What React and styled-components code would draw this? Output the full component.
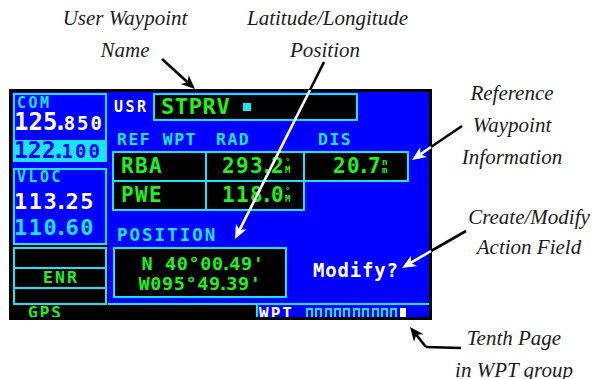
import React from "react";
import styled, { createGlobalStyle } from "styled-components";

const BLUE = "#0000ff";
const CYAN = "#1ce4f8";
const GREEN = "#22f01c";
const MONO = `"DejaVu Sans Mono", "Liberation Mono", monospace`;

const Global = createGlobalStyle`
  html, body { margin: 0; padding: 0; background: #fff; }
  body { width: 592px; height: 379px; overflow: hidden; }
`;

const Page = styled.div`
  position: relative;
  width: 592px;
  height: 379px;
  display: grid;
  grid-template-columns: 432px 160px;
  background: #fff;
`;

const LeftPart = styled.div`
  display: flex;
  flex-direction: column;
`;

const TopCaptions = styled.div`
  height: 89px;
  display: grid;
  grid-template-columns: 50px 150px 47px 156px;
`;

const Caption = styled.div`
  grid-column: ${(p) => p.$col || "auto"};
  font-family: "Liberation Serif", "DejaVu Serif", serif;
  font-style: italic;
  font-size: 21px;
  line-height: ${(p) => p.$lh || 32}px;
  color: #1c1c1c;
  text-align: center;
  padding-top: ${(p) => p.$pt || 0}px;
  padding-left: ${(p) => p.$pl || 0}px;
  margin-top: ${(p) => p.$mt || 0}px;
  white-space: nowrap;
`;

const RightCaptions = styled.div`
  display: flex;
  flex-direction: column;
  padding-top: 77px;
`;

/* ---------- the GPS screen ---------- */

const Screen = styled.div`
  margin-left: 9px;
  width: 423px;
  height: 231px;
  box-sizing: border-box;
  background: #000;
  padding: 3px;
  display: flex;
  flex-direction: column;
  font-family: ${MONO};
  font-weight: bold;
`;

const Main = styled.div`
  display: flex;
  height: 213px;
`;

const LeftCol = styled.div`
  width: 96px;
  display: flex;
  flex-direction: column;
`;

const UpperLeft = styled.div`
  background: ${BLUE};
  padding: 1px 1px 0;
  height: 153px;
  box-sizing: border-box;
  display: flex;
  flex-direction: column;
  gap: 6px;
`;

const RadioBox = styled.div`
  height: ${(p) => p.$h}px;
  box-sizing: border-box;
  border: 2px solid ${CYAN};
  border-bottom-width: ${(p) => (p.$open ? 0 : 2)}px;
  display: flex;
  flex-direction: column;
`;

const RadioLabel = styled.div`
  font-size: 15px;
  line-height: 15px;
  letter-spacing: 2.5px;
  color: ${CYAN};
  padding-left: 2px;
  margin-top: ${(p) => p.$mt || 0}px;
`;

const Freq = styled.div`
  font-size: ${(p) => p.$size}px;
  line-height: ${(p) => p.$size}px;
  letter-spacing: ${(p) => p.$ls || 0}px;
  color: ${(p) => p.$color};
  margin-top: ${(p) => p.$mt || 0}px;
  margin-left: -1px;
  white-space: nowrap;
`;

const Small = styled.span`
  font-size: ${(p) => p.$size}px;
  letter-spacing: ${(p) => p.$ls || 0}px;
`;

const Dot = styled.span`
  margin: 0 -0.17em;
`;

const ActiveBand = styled.div`
  margin: auto -2px 0;
  height: 22px;
  background: ${CYAN};
  padding-left: 2px;
  display: flex;
  align-items: center;
`;

const LowerLeft = styled.div`
  flex: 1;
  background: #000;
  padding: 2px 1px 0;
  display: flex;
  flex-direction: column;
`;

const SideCell = styled.div`
  height: ${(p) => p.$h}px;
  box-sizing: border-box;
  border: 2px solid ${CYAN};
  display: flex;
  align-items: center;
  justify-content: center;
  color: ${GREEN};
  font-size: 16.5px;
  line-height: 16px;
  letter-spacing: 2px;
  padding-left: 2px;
  & + & {
    margin-top: -2px;
  }
`;

const RightPanel = styled.div`
  flex: 1;
  background: ${BLUE};
  border-bottom: 2px solid ${CYAN};
  box-sizing: border-box;
  padding: 1px 0 0 4px;
  display: flex;
  flex-direction: column;
`;

const TopRow = styled.div`
  display: flex;
  align-items: center;
  height: 28px;
`;

const UsrLabel = styled.div`
  width: 41px;
  box-sizing: border-box;
  padding-left: 2px;
  color: #fff;
  font-size: 15px;
  line-height: 15px;
  letter-spacing: 2.5px;
`;

const NameBox = styled.div`
  width: 205px;
  height: 28px;
  box-sizing: border-box;
  border: 2px solid ${CYAN};
  background: #000;
  display: flex;
  align-items: center;
  padding-left: 6px;
`;

const NameText = styled.span`
  color: ${GREEN};
  font-size: 22px;
  line-height: 22px;
  letter-spacing: 0.6px;
`;

const Cursor = styled.span`
  width: 8px;
  height: 8px;
  background: ${CYAN};
  margin-left: 13px;
`;

const HeaderRow = styled.div`
  display: grid;
  grid-template-columns: 93px 98px 106px;
  margin-top: 11px;
  height: 16px;
`;

const HeaderText = styled.div`
  padding-left: ${(p) => p.$pl}px;
  color: ${CYAN};
  font-size: 16.5px;
  line-height: 16px;
  letter-spacing: 1.5px;
  white-space: nowrap;
`;

const Table = styled.div`
  margin-top: 3px;
  display: flex;
  flex-direction: column;
`;

const TRow = styled.div`
  display: flex;
  height: 31px;
  & + & {
    margin-top: -2px;
  }
`;

const TCell = styled.div`
  width: ${(p) => p.$w}px;
  box-sizing: border-box;
  border: 2px solid ${CYAN};
  background: #000;
  display: flex;
  align-items: center;
  padding-left: ${(p) => p.$pl}px;
  & + & {
    margin-left: -2px;
  }
`;

const CellText = styled.span`
  color: ${GREEN};
  font-size: 21px;
  line-height: 21px;
  letter-spacing: 1.4px;
  white-space: nowrap;
`;

const Units = styled.span`
  display: inline-flex;
  flex-direction: column;
  justify-content: space-between;
  height: 16px;
  margin-left: 0px;
  margin-top: -1px;
  color: ${GREEN};
  font-size: 9px;
  line-height: 8px;
  letter-spacing: 0;
`;

const SectionLabel = styled.div`
  margin-top: 16px;
  padding-left: 5px;
  color: ${CYAN};
  font-size: 17.5px;
  line-height: 17px;
  letter-spacing: 2px;
`;

const BottomRow = styled.div`
  display: flex;
  align-items: center;
  margin-top: 3px;
`;

const PosBox = styled.div`
  margin-left: 1px;
  width: 174px;
  height: 51px;
  box-sizing: border-box;
  border: 2px solid ${CYAN};
  background: #000;
  display: flex;
  flex-direction: column;
  align-items: center;
  justify-content: center;
  padding-top: 2px;
`;

const Coord = styled.div`
  color: ${GREEN};
  font-size: 18.5px;
  line-height: 20px;
  letter-spacing: 0.6px;
  white-space: nowrap;
  margin-left: ${(p) => p.$ml || 0}px;
`;

const Action = styled.div`
  margin-left: 26px;
  margin-top: -4px;
  color: #fff;
  font-size: 19px;
  line-height: 19px;
  letter-spacing: 0.8px;
`;

const Strip = styled.div`
  display: flex;
  height: 12px;
  overflow: hidden;
`;

const StripLeft = styled.div`
  width: 244px;
  box-sizing: border-box;
  background: #000;
  padding-left: 16px;
  color: ${GREEN};
  font-size: 16px;
  line-height: 16px;
  letter-spacing: 2px;
`;

const StripRight = styled.div`
  flex: 1;
  background: ${BLUE};
  border-left: 2px solid ${CYAN};
  display: flex;
  align-items: flex-start;
  padding-left: 1px;
`;

const StripWord = styled.span`
  color: #fff;
  font-size: 16px;
  line-height: 16px;
  letter-spacing: 2px;
  margin-top: 1px;
`;

const PageMarks = styled.div`
  display: flex;
  gap: 2.4px;
  margin-left: 12px;
  margin-top: 3px;
`;

const PageMark = styled.span`
  width: 7px;
  height: 12px;
  box-sizing: border-box;
  border: 2px solid ${CYAN};
  border-bottom: 0;
  background: ${(p) => (p.$current ? "#fff" : "transparent")};
  ${(p) => (p.$current ? "border-color: #fff; width: 6px;" : "")}
`;

const Overlay = styled.svg`
  position: absolute;
  left: 0;
  top: 0;
  pointer-events: none;
`;

function headPoints(tip, from, len = 14, half = 6, notch = 4) {
  const dx = tip[0] - from[0];
  const dy = tip[1] - from[1];
  const d = Math.hypot(dx, dy);
  const ux = dx / d;
  const uy = dy / d;
  const px = -uy;
  const py = ux;
  const bx = tip[0] - ux * len;
  const by = tip[1] - uy * len;
  const nx = tip[0] - ux * (len - notch);
  const ny = tip[1] - uy * (len - notch);
  return {
    poly: `${tip[0]},${tip[1]} ${bx + px * half},${by + py * half} ${nx},${ny} ${bx - px * half},${by - py * half}`,
    neck: [nx, ny],
  };
}

function Arrow({ pts, colors }) {
  // pts: list of points, last is tip; colors: colour per segment, last one is head colour
  const tip = pts[pts.length - 1];
  const prev = pts[pts.length - 2];
  const h = headPoints(tip, prev);
  const segs = [];
  for (let i = 0; i < pts.length - 1; i++) {
    const a = pts[i];
    const b = i === pts.length - 2 ? h.neck : pts[i + 1];
    segs.push(
      <line
        key={i}
        x1={a[0]}
        y1={a[1]}
        x2={b[0]}
        y2={b[1]}
        stroke={colors[i]}
        strokeWidth="2.6"
        strokeLinecap="butt"
      />
    );
  }
  return (
    <g>
      {segs}
      <polygon points={h.poly} fill={colors[colors.length - 1]} />
    </g>
  );
}

const marks = Array.from({ length: 10 });

export default function App() {
  return (
    <>
      <Global />
      <Page>
        <LeftPart>
          <TopCaptions>
            <Caption $col="2" $pt={2}>
              User Waypoint
              <br />
              Name
            </Caption>
            <Caption $col="4" $pt={2}>
              Latitude/Longitude
              <br />
              Position
            </Caption>
          </TopCaptions>
          <Screen>
            <Main>
              <LeftCol>
                <UpperLeft>
                  <RadioBox $h={69} $open>
                    <RadioLabel $mt={1}>COM</RadioLabel>
                    <Freq $size={24} $color="#fff" $mt={-1}>
                      125<Dot>.</Dot>
                      <Small $size={19} $ls={2}>850</Small>
                    </Freq>
                    <ActiveBand>
                      <Freq $size={23} $color={BLUE}>
                        122<Dot>.</Dot>
                        <Small $size={19} $ls={2}>100</Small>
                      </Freq>
                    </ActiveBand>
                  </RadioBox>
                  <RadioBox $h={77}>
                    <RadioLabel $mt={0}>VLOC</RadioLabel>
                    <Freq $size={22} $ls={1.5} $color="#fff" $mt={6}>
                      113<Dot>.</Dot>25
                    </Freq>
                    <Freq $size={22} $ls={1.5} $color={CYAN} $mt={4}>
                      110<Dot>.</Dot>60
                    </Freq>
                  </RadioBox>
                </UpperLeft>
                <LowerLeft>
                  <SideCell $h={22} />
                  <SideCell $h={22}>ENR</SideCell>
                  <SideCell $h={18} />
                </LowerLeft>
              </LeftCol>
              <RightPanel>
                <TopRow>
                  <UsrLabel>USR</UsrLabel>
                  <NameBox>
                    <NameText>STPRV</NameText>
                    <Cursor />
                  </NameBox>
                </TopRow>
                <HeaderRow>
                  <HeaderText $pl={5}>REF WPT</HeaderText>
                  <HeaderText $pl={11}>RAD</HeaderText>
                  <HeaderText $pl={15}>DIS</HeaderText>
                </HeaderRow>
                <Table>
                  <TRow>
                    <TCell $w={95} $pl={7}>
                      <CellText>RBA</CellText>
                    </TCell>
                    <TCell $w={100} $pl={15}>
                      <CellText>
                        293<Dot>.</Dot>2
                      </CellText>
                      <Units>
                        <span>°</span>
                        <span>M</span>
                      </Units>
                    </TCell>
                    <TCell $w={106} $pl={28}>
                      <CellText>
                        20<Dot>.</Dot>7
                      </CellText>
                      <Units>
                        <span>n</span>
                        <span>m</span>
                      </Units>
                    </TCell>
                  </TRow>
                  <TRow>
                    <TCell $w={95} $pl={7}>
                      <CellText>PWE</CellText>
                    </TCell>
                    <TCell $w={100} $pl={15}>
                      <CellText>
                        118<Dot>.</Dot>0
                      </CellText>
                      <Units>
                        <span>°</span>
                        <span>M</span>
                      </Units>
                    </TCell>
                  </TRow>
                </Table>
                <SectionLabel>POSITION</SectionLabel>
                <BottomRow>
                  <PosBox>
                    <Coord $ml={6}>
                      N 40°00<Dot>.</Dot>49'
                    </Coord>
                    <Coord>
                      W095°49<Dot>.</Dot>39'
                    </Coord>
                  </PosBox>
                  <Action>Modify?</Action>
                </BottomRow>
              </RightPanel>
            </Main>
            <Strip>
              <StripLeft>GPS</StripLeft>
              <StripRight>
                <StripWord>WPT</StripWord>
                <PageMarks>
                  {marks.map((_, i) => (
                    <PageMark key={i} />
                  ))}
                  <PageMark $current />
                </PageMarks>
              </StripRight>
            </Strip>
          </Screen>
        </LeftPart>
        <RightCaptions>
          <Caption $lh={32}>
            Reference
            <br />
            Waypoint
            <br />
            Information
          </Caption>
          <Caption $lh={30} $pl={34} $mt={29}>
            Create/Modify
            <br />
            Action Field
          </Caption>
          <Caption $lh={32} $pl={4} $mt={60}>
            Tenth Page
            <br />
            in WPT group
          </Caption>
        </RightCaptions>
        <Overlay width="592" height="379" viewBox="0 0 592 379">
          <Arrow pts={[[162, 59], [195, 89]]} colors={["#000", "#000"]} />
          <Arrow
            pts={[[324, 62], [310, 90], [235, 239]]}
            colors={["#000", "#fff", "#fff"]}
          />
          <Arrow
            pts={[[462, 126], [431, 147], [412, 160]]}
            colors={["#000", "#fff", "#fff"]}
          />
          <Arrow
            pts={[[466, 231], [431, 251], [402, 268]]}
            colors={["#000", "#fff", "#fff"]}
          />
          <Arrow
            pts={[[461, 348], [426, 347], [410, 327]]}
            colors={["#000", "#000", "#000"]}
          />
        </Overlay>
      </Page>
    </>
  );
}
